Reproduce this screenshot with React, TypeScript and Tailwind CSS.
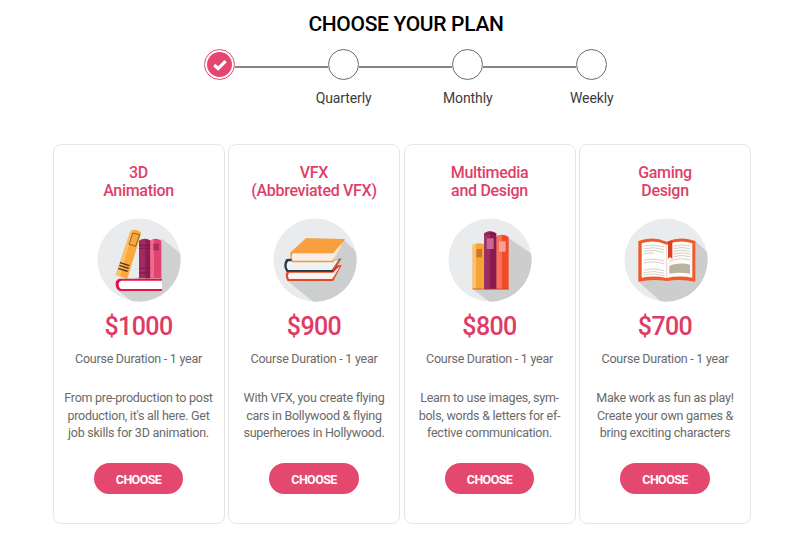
import { useState } from "react";
import type { ReactNode } from "react";

const BooksAnimation = () => (
  <>
    <path d="M216 86L276 134V300H160L82 240L150 200Z" fill="#d0d0d1" />
    <path d="M149 93Q165 82 183 93V206H149Z" fill="#a02b60" />
    <path d="M168 88Q177 88 183 93V206H168Z" fill="#8c1b50" />
    <path d="M183 93Q200 82 216 93V206H183Z" fill="#e0436f" />
    <path d="M183 93Q188 89 194 88V206H183Z" fill="#ec6c8d" />
    <path d="M149 107H183M149 116H183M149 176H183M149 190H183" stroke="#7d1a4b" strokeWidth="3" />
    <rect x="192" y="102" width="17" height="20" fill="#b42a5b" />
    <path d="M123 65Q138 54 156 69L114 207L79 196Z" fill="#f9a83a" />
    <path d="M123 65Q128 61 132 61L92 200L79 196Z" fill="#fbc06c" />
    <path d="M130 70L151 75L139 110L119 104Z" fill="none" stroke="#80552c" strokeWidth="2.5" />
    <path d="M92 159L120 168M90 167L118 176M87 176L115 185" stroke="#4d3222" strokeWidth="4" />
    <path d="M218 207H91Q77 210 79 226Q80 240 92 244H218Z" fill="#e2154a" />
    <path d="M218 213H96Q87 216 88 226Q89 236 96 238H218Z" fill="#fff" />
  </>
);

const BooksVfx = () => (
  <>
    <path d="M236 90L278 132V290H160L64 212L150 170Z" fill="#cdcecf" />
    <path d="M65 184L90 178L229 166L204 214H67Q57 199 65 184Z" fill="#e64825" />
    <path d="M71 189H203L223 170L200 208H71Q65 199 71 189Z" fill="#f7f5f4" />
    <path d="M206 187L223 172L203 206Z" fill="#e9e2df" />
    <path d="M63 148L95 146L200 156L228 146L204 186H63Q50 167 63 148Z" fill="#2a3949" />
    <path d="M229 146L204 184L199 180L220 150Z" fill="#e0542f" />
    <path d="M68 155H199L220 150L199 181H68Q60 169 68 155Z" fill="#f2f2f2" />
    <path d="M76 128L122 86L238 88L204 158H82Q72 147 76 128Z" fill="#f09a3e" />
    <path d="M82 131H202L235 95L201 153H83Q76 143 82 131Z" fill="#f7eee6" />
    <path d="M76 129L122 87L238 88L204 131Z" fill="#f99f3e" />
    <path d="M206 139L232 106L205 154Z" fill="#f2dcc8" />
  </>
);

const BooksMultimedia = () => (
  <>
    <path d="M204 84L276 134V290H165L97 238Z" fill="#cdcdce" />
    <path d="M97 106Q113 96 132 104V239H97Z" fill="#f6a637" />
    <path d="M97 106Q101 102 107 102V239H97Z" fill="#fbc16d" />
    <rect x="108" y="118" width="17" height="25" fill="#c9772d" />
    <path d="M168 80Q187 69 205 82V239H168Z" fill="#f04a26" />
    <path d="M168 80Q176 75 185 75V239H168Z" fill="#f8705b" />
    <rect x="176" y="95" width="20" height="31" fill="#f9a192" />
    <path d="M132 71Q149 58 168 71V239H132Z" fill="#8a194e" />
    <path d="M132 71Q139 66 149 65V239H132Z" fill="#9e2c61" />
    <path d="M132 76Q149 66 168 76" fill="none" stroke="#6c123e" strokeWidth="2" />
    <rect x="139" y="86" width="21" height="32" fill="#cb6895" />
    <path d="M97 238H205" stroke="#b93f26" strokeWidth="2" />
  </>
);

const BookGaming = () => (
  <>
    <path d="M237 94L278 132V290H150L67 216Z" fill="#cdcdce" />
    <path
      d="M66 94Q108 78 151 96Q194 78 237 94V216Q194 207 151 214Q108 207 66 216Z"
      fill="#f1592a"
    />
    <path d="M76 101Q113 88 151 105V205Q113 197 76 204Z" fill="#fff" />
    <path d="M151 105Q190 88 228 101V204Q190 197 151 205Z" fill="#fdfbfa" />
    <path d="M151 108V203" stroke="#e9d9d1" strokeWidth="2" />
    <path
      d="M82 109Q112 102 144 112M82 117Q112 110 144 120M82 125Q112 118 144 128M82 133Q97 129 113 130M82 152Q112 144 144 154M82 160Q112 152 144 162M82 181Q112 173 144 183M82 189Q112 181 144 191M82 196Q112 189 144 198"
      fill="none"
      stroke="#c2bba9"
      strokeWidth="2"
    />
    <path
      d="M172 109Q196 102 221 109M172 117Q196 110 221 117M172 125Q196 118 221 125M172 133Q196 126 221 133M172 141Q196 134 221 141M160 155Q190 142 221 151"
      fill="none"
      stroke="#c2bba9"
      strokeWidth="2"
    />
    <path d="M159 168Q190 156 221 165V192Q190 186 159 192Z" fill="#bab49f" />
    <path d="M155 96L168 92V148L161 142L155 148Z" fill="#dc3f20" />
  </>
);

const steps = ["", "Quarterly", "Monthly", "Weekly"];

const plans: {
  title: string[];
  price: string;
  text: string[];
  art: ReactNode;
}[] = [
  {
    title: ["3D", "Animation"],
    price: "$1000",
    text: [
      "From pre-production to post",
      "production, it's all here. Get",
      "job skills for 3D animation.",
    ],
    art: <BooksAnimation />,
  },
  {
    title: ["VFX", "(Abbreviated VFX)"],
    price: "$900",
    text: [
      "With VFX, you create flying",
      "cars in Bollywood & flying",
      "superheroes in Hollywood.",
    ],
    art: <BooksVfx />,
  },
  {
    title: ["Multimedia", "and Design"],
    price: "$800",
    text: [
      "Learn to use images, sym-",
      "bols, words & letters for ef-",
      "fective communication.",
    ],
    art: <BooksMultimedia />,
  },
  {
    title: ["Gaming", "Design"],
    price: "$700",
    text: [
      "Make work as fun as play!",
      "Create your own games &",
      "bring exciting characters",
    ],
    art: <BookGaming />,
  },
];

export default function App() {
  const [active, setActive] = useState(0);

  return (
    <main className="h-[552px] w-[800px] overflow-hidden bg-white font-['Roboto',sans-serif]">
      <h1 className="ml-[12px] pt-[11px] text-center text-[21px] leading-[26px] font-medium tracking-[-0.32px] text-black">
        CHOOSE YOUR PLAN
      </h1>

      <div className="mt-[12px] ml-[204px] flex items-start">
        {steps.map((step, i) => (
          <div key={i} className="flex items-start">
            {i > 0 && <div className="mt-[17px] h-[1.5px] w-[93.1px] bg-[#858585]" />}
            <div className="flex w-[31px] flex-col items-center">
              <button
                onClick={() => setActive(i)}
                className={`flex h-[31px] w-[31px] items-center justify-center rounded-full border ${active === i ? "border-[#e5466f]" : "border-[#6b6b6b]"}`}
              >
                {active === i && (
                  <span className="flex h-[25px] w-[25px] items-center justify-center rounded-full bg-[#e5466f]">
                    <svg viewBox="0 0 14 12" className="h-[12px] w-[14px]">
                      <path d="M1.2 6L5.2 9.6L12.6 2.2" fill="none" stroke="#fff" strokeWidth="3.2" />
                    </svg>
                  </span>
                )}
              </button>
              <span className="mt-[8px] h-[21px] text-[14px] leading-[20px] tracking-[-0.1px] whitespace-nowrap text-[#3c3c3c]">
                {step}
              </span>
            </div>
          </div>
        ))}
      </div>

      <div className="mt-[35px] ml-[52.5px] flex w-[698.5px] gap-[3.5px]">
        {plans.map((plan) => (
          <section
            key={plan.price}
            className="flex h-[379.5px] flex-1 flex-col items-center rounded-[8px] border border-[#e6e6e6] pt-[19px]"
          >
            <h2 className="text-center text-[16px] leading-[18px] font-medium tracking-[-0.3px] whitespace-nowrap text-[#de3f68]">
              {plan.title[0]}
              <br />
              {plan.title[1]}
            </h2>
            <svg viewBox="23 25 252 252" className="mt-[18px] ml-px h-[84px] w-[84px] shrink-0">
              <clipPath id={`disc-${plan.price.slice(1)}`}>
                <circle cx="149" cy="151" r="125" />
              </clipPath>
              <g clipPath={`url(#disc-${plan.price.slice(1)})`}>
                <circle cx="149" cy="151" r="125" fill="#e9ebec" />
                {plan.art}
              </g>
            </svg>
            <p className="mt-[10px] text-[25px] leading-[30px] font-medium tracking-[-0.6px] text-[#e03a66]">
              {plan.price}
            </p>
            <p className="mt-[8px] text-[12.5px] leading-[18px] tracking-[-0.25px] whitespace-nowrap text-[#6a6a6a]">
              Course Duration - 1 year
            </p>
            <div className="mt-[21px] text-center text-[12.5px] leading-[17.6px] tracking-[-0.25px] whitespace-nowrap text-[#6a6a6a]">
              {plan.text.map((line) => (
                <p key={line}>{line}</p>
              ))}
            </div>
            <button className="mt-[21.5px] h-[30.5px] w-[89.5px] rounded-full bg-[#e5486f] pt-[3px] text-[12.5px] leading-[28px] font-bold tracking-[-0.6px] text-white">
              CHOOSE
            </button>
          </section>
        ))}
      </div>
    </main>
  );
}
